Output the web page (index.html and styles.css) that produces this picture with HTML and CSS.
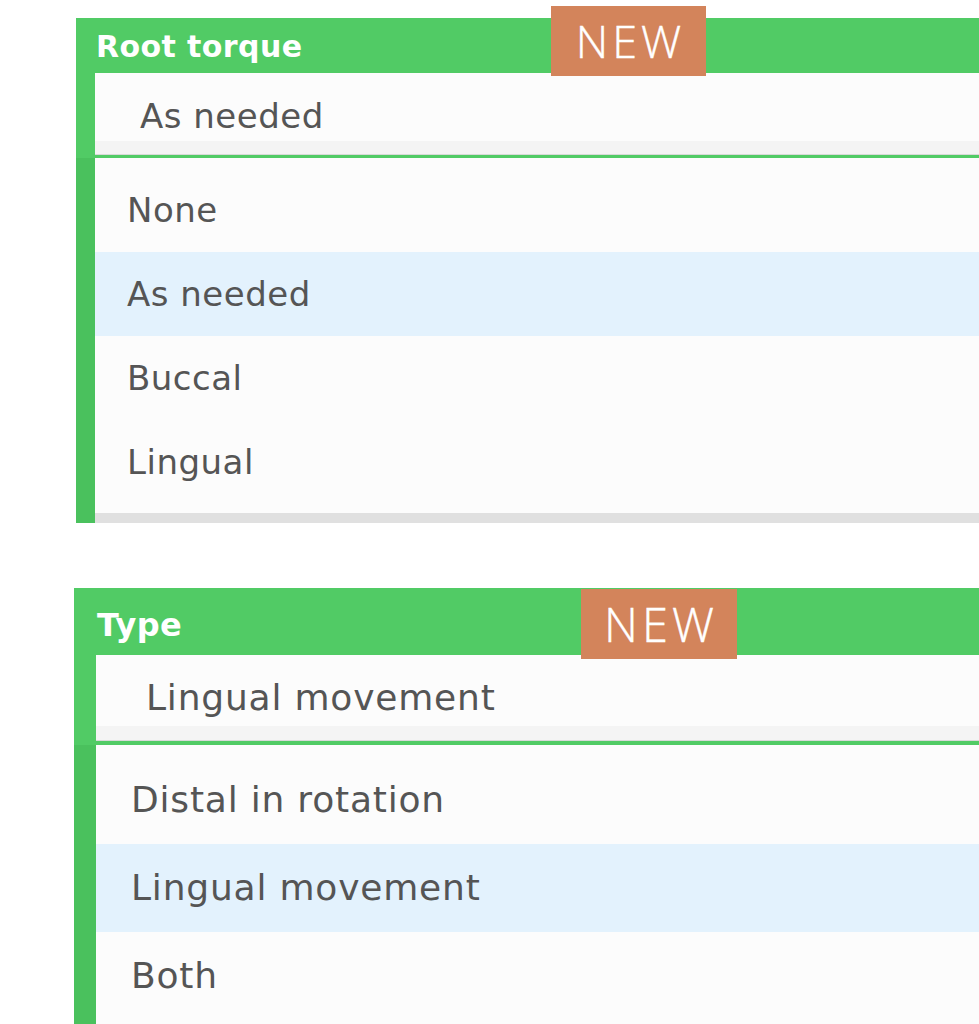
FILE: index.html
```html
<!DOCTYPE html>
<html lang="en">
<head>
<meta charset="utf-8">
<title>Dropdowns</title>
<link rel="stylesheet" href="styles.css">
</head>
<body>
  <section class="panel panel--torque">
    <span class="badge">NEW</span>
    <div class="label">Root torque</div>
    <div class="field"><div class="input">As needed</div></div>
    <div class="menu-area">
      <ul class="menu">
        <li class="option">None</li>
        <li class="option is-selected">As needed</li>
        <li class="option">Buccal</li>
        <li class="option">Lingual</li>
      </ul>
    </div>
  </section>

  <section class="panel panel--type">
    <span class="badge">NEW</span>
    <div class="label">Type</div>
    <div class="field"><div class="input">Lingual movement</div></div>
    <div class="menu-area">
      <ul class="menu">
        <li class="option">Distal in rotation</li>
        <li class="option is-selected">Lingual movement</li>
        <li class="option">Both</li>
      </ul>
    </div>
  </section>
</body>
</html>
```

FILE: styles.css
```css
html, body {
  margin: 0;
  padding: 0;
  background: #ffffff;
  overflow: hidden;
}

body {
  font-family: "DejaVu Sans", "Liberation Sans", sans-serif;
  color: #555555;
}

.panel {
  position: relative;
  background: #51cb65;
}

.panel--torque {
  margin: 18px 0 0 76px;
}

.panel--type {
  margin: 65px 0 0 74px;
}

.badge {
  position: absolute;
  display: flex;
  align-items: center;
  justify-content: center;
  width: 155px;
  height: 70px;
  box-sizing: border-box;
  background: #d3845b;
  color: #ffffff;
  font-family: "Open Sans", "Liberation Sans", sans-serif;
  font-weight: 300;
  font-size: 45px;
  line-height: 70px;
  letter-spacing: 4px;
  padding-left: 4px;
  -webkit-text-stroke: 0.4px #ffffff;
}

.panel--torque .badge {
  left: 475px;
  top: -12px;
}

.panel--type .badge {
  left: 507px;
  top: 1px;
  width: 156px;
  font-size: 47px;
}

.label {
  color: #ffffff;
  font-weight: bold;
  white-space: nowrap;
}

.panel--torque .label {
  padding: 2px 0 0 20px;
  font-size: 30px;
  line-height: 53px;
  letter-spacing: 0.4px;
}

.panel--type .label {
  padding: 8px 0 0 23px;
  font-size: 32px;
  line-height: 59px;
  letter-spacing: 0.4px;
}

.panel--torque .field {
  padding: 0 0 3px 19px;
}

.panel--type .field {
  padding: 0 0 4px 22px;
}

.input {
  box-sizing: border-box;
  border-bottom: 1px solid #d9d9d9;
  white-space: nowrap;
}

.panel--torque .input {
  height: 82px;
  padding: 23px 0 0 45px;
  font-size: 34px;
  line-height: 40px;
  letter-spacing: 0.5px;
  background: linear-gradient(to bottom, #fcfcfc 68px, #f4f4f4 68px);
}

.panel--type .input {
  height: 86px;
  padding: 22px 0 0 50px;
  font-size: 36px;
  line-height: 42px;
  letter-spacing: 0.8px;
  background: linear-gradient(to bottom, #fcfcfc 71px, #f4f4f4 71px);
}

.menu-area {
  background: #4ac15d;
}

.panel--torque .menu-area {
  padding-left: 19px;
}

.panel--type .menu-area {
  padding-left: 22px;
}

.menu {
  list-style: none;
  margin: 0;
  background: #fcfcfc;
  border-bottom: 10px solid #e0e0e0;
}

.panel--torque .menu {
  padding: 10px 0 9px;
}

.panel--type .menu {
  padding: 11px 0 9px;
}

.option {
  white-space: nowrap;
}

.panel--torque .option {
  height: 84px;
  padding-left: 32px;
  font-size: 34px;
  line-height: 84px;
  letter-spacing: 0.5px;
}

.panel--type .option {
  height: 88px;
  padding-left: 35px;
  font-size: 36px;
  line-height: 88px;
  letter-spacing: 0.8px;
}

.option.is-selected {
  background: #e3f2fd;
}
```
